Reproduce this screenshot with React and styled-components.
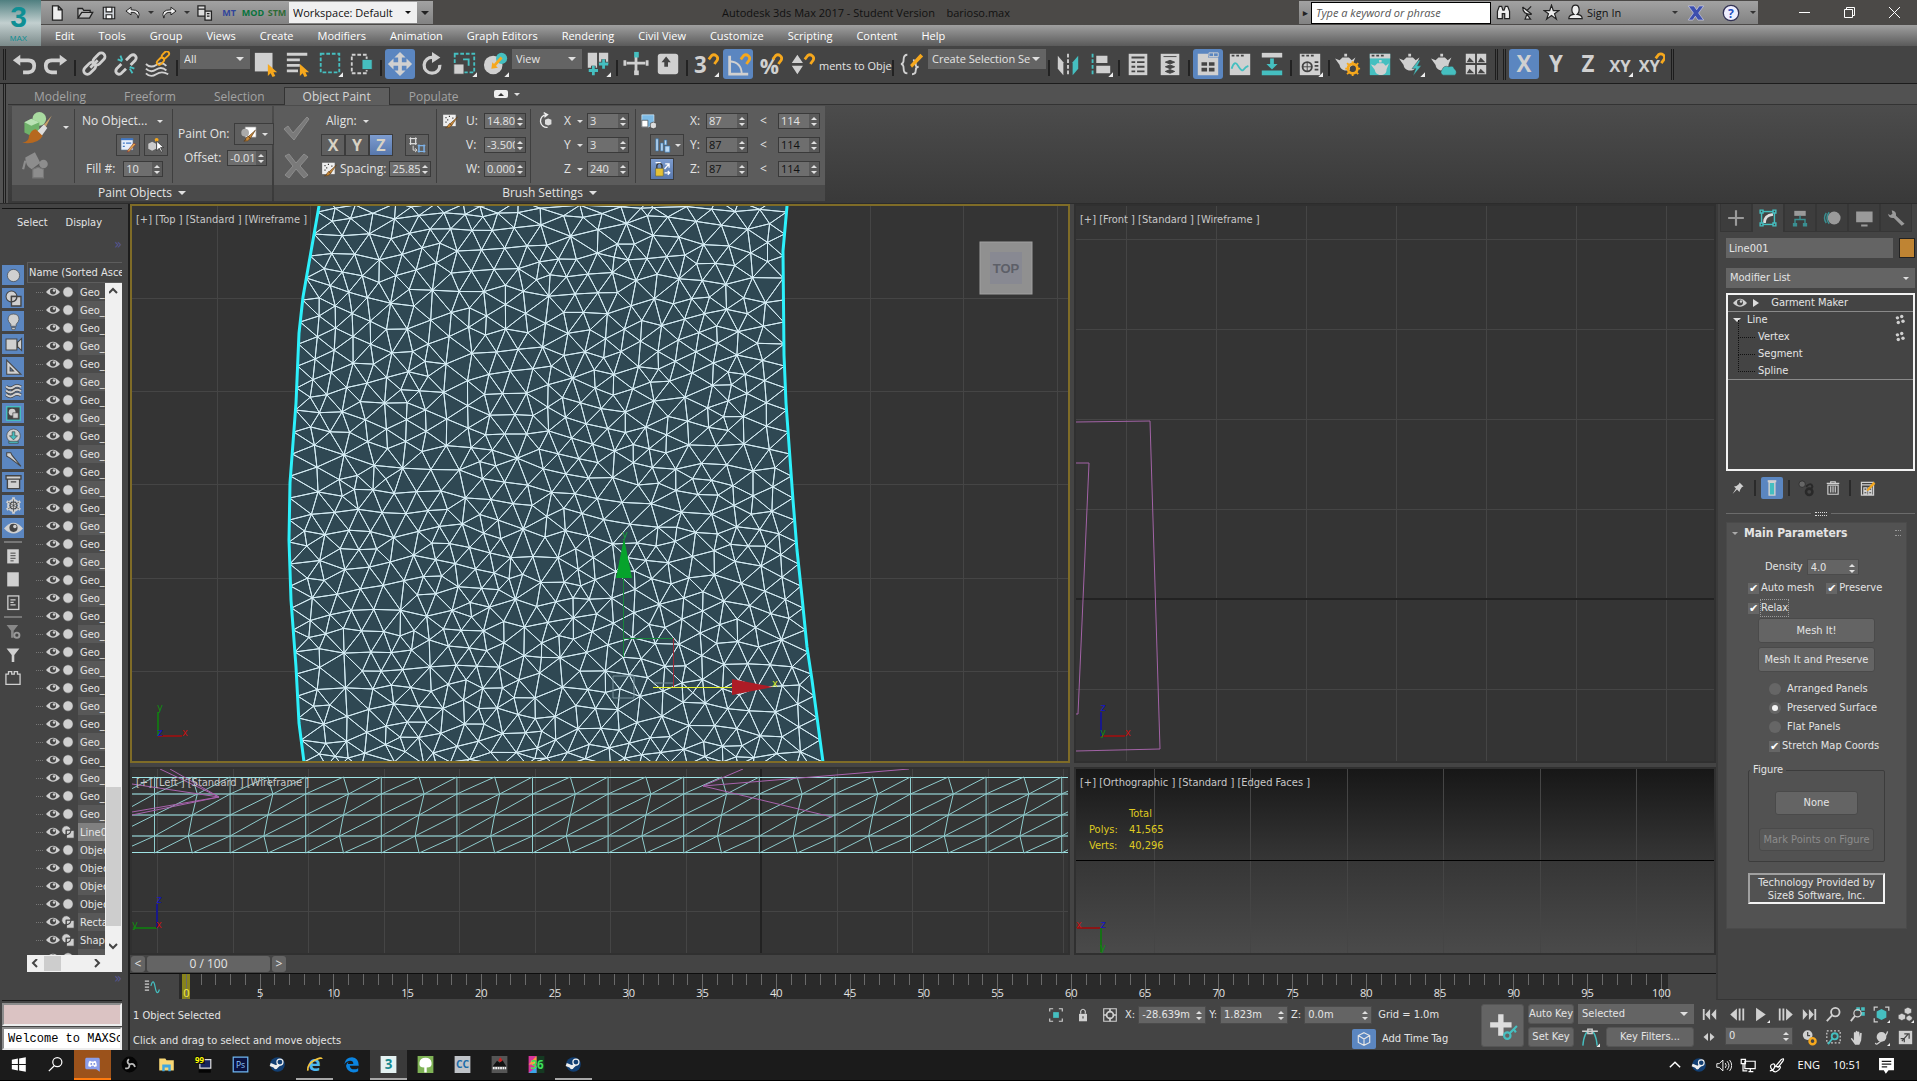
import React from 'react';
import styled, { createGlobalStyle, css } from 'styled-components';

const UI = '"Open Sans", "Noto Sans", sans-serif';
const TAHOMA = '"DejaVu Sans Condensed", "DejaVu Sans", sans-serif';
const L = '#d0d0d0';
const T = '#45bfc0';
const O = '#f6a81d';
const D = '#444444';

/* ---------- icons, all drawn on a 28 x 28 grid ---------- */

const magnet = <path d="M17 9l3-4a4 4 0 0 1 6 5l-3 4" fill="none" stroke={O} strokeWidth="3" />;
const corner = <path d="M28 23v5h-5z" fill="#eee" />;
const cursor = <path d="M16 14v13l3-3 2 4 3-1-2-4h4z" fill={O} />;
const letter = (t, size = 24) => (
  <text x="14" y="23" textAnchor="middle" fontSize={size} fontWeight="bold" fill={L} fontFamily="Open Sans">{t}</text>
);
const teapot = <path d="M0 8l5 2 3-3h7l3 3 4-3-3 7c0 5-3 7-7 7s-7-3-7-6zM10 3h3v3h-3z" fill={L} />;
const steam = (
  <>
    <circle cx="14" cy="14" r="12" fill="#123f73" />
    <path d="M2 14l10 4 6-5" stroke="#eee" strokeWidth="5" fill="none" />
    <circle cx="18" cy="10" r="5" fill="#123f73" stroke="#eee" strokeWidth="2" />
    <circle cx="11" cy="19" r="3" fill="#eee" />
  </>
);

const ICONS = {
  undo: <path d="M10 4L2 10l8 6v-4h8q5 0 5 4.500t-5 4.500h-5v4h6q8-1 8-9t-8-8h-9z" fill={L} />,
  redo: <path d="M18 4l8 6-8 6v-4h-8q-5 0-5 4.500T10 21h5v4H9q-8-1-8-9t8-8h9z" fill={L} />,
  link: <g fill="none" stroke={L} strokeWidth="3"><rect x="12" y="5" width="15" height="8" rx="4" transform="rotate(-45 19 9)" /><rect x="2" y="15" width="15" height="8" rx="4" transform="rotate(-45 9 19)" /><path d="M10 18l8-8" /></g>,
  unlink: <g fill="none" stroke={L} strokeWidth="3"><path d="M14 10l5-5q3-2 5 0t0 5l-5 5M14 19l-5 5q-3 2-5 0t0-5l5-5" /><path d="M8 5l2 5M18 19l3 5M18 17l5 2M5 9l5 2" stroke={T} strokeWidth="2" /></g>,
  bind: <g fill="none" stroke={L} strokeWidth="2"><path d="M1 14q5 5 11 1t11 1M1 19q5 5 11 1t11 1M1 24q5 5 11 1t13 0" /><g stroke={O}><rect x="18" y="2" width="9" height="5" rx="2.500" transform="rotate(-45 22 5)" /><rect x="12" y="9" width="9" height="5" rx="2.500" transform="rotate(-45 16 11)" /></g></g>,
  pick: <><rect x="2" y="2" width="19" height="20" fill={L} />{cursor}</>,
  byname: <><path d="M2 2h22v3H2zM2 8h14v3H2zM2 14h14v3H2zM2 20h12v3H2z" fill={L} />{cursor}</>,
  region: <><rect x="4" y="3" width="20" height="20" fill="none" stroke={T} strokeWidth="2" strokeDasharray="4 2" />{corner}</>,
  crossing: <><rect x="3" y="4" width="16" height="20" fill="none" stroke={L} strokeWidth="2" strokeDasharray="4 2" /><rect x="14" y="9" width="11" height="11" fill={T} stroke={D} /></>,
  move: <path d="M14 1l6 6h-4v5h5V8l6 6-6 6v-4h-5v5h4l-6 6-6-6h4v-5H7v4l-6-6 6-6v4h5V7H8z" fill={L} />,
  rotate: <><path d="M15 7a8.500 8.500 0 1 0 7.500 8" fill="none" stroke={L} strokeWidth="3.500" /><path d="M14 1l9 6-9 6z" fill={L} /></>,
  scale: <><rect x="4" y="3" width="21" height="20" fill="none" stroke={T} strokeWidth="2" strokeDasharray="4 2" /><rect x="3" y="14" width="11" height="11" fill={L} stroke={D} /><path d="M13 9h6v7" fill="none" stroke={T} strokeWidth="2" />{corner}</>,
  place: <><circle cx="11" cy="15" r="10" fill={L} /><circle cx="20" cy="8" r="6" fill={T} /><path d="M9 19l1-7 6 6z" fill={O} /><path d="M12 16l8-9" stroke={O} strokeWidth="3" />{corner}</>,
  pivot: <><path d="M3 2h10v16H3zM15 2h10v12H15z" fill={L} /><path d="M9 16v10M4 21h10M20 9v10M15 14h10" stroke={D} strokeWidth="5" /><path d="M9 16v10M4 21h10M20 9v10M15 14h10" stroke={T} strokeWidth="3" />{corner}</>,
  manip: <><path d="M14 6v18M4 13h20M2 10v6M26 10v6" stroke={L} strokeWidth="3" /><rect x="12" y="1" width="5" height="6" fill={T} /><rect x="12" y="21" width="5" height="5" fill={L} /></>,
  keyb: <><rect x="3" y="3" width="22" height="22" rx="3" fill={L} /><path d="M12 6l5 6h-3v5h-4v-5H7z" fill={D} /></>,
  snap: <><text x="1" y="24" fontSize="24" fontWeight="bold" fill={L} fontFamily="Open Sans">3</text>{magnet}{corner}</>,
  angle: <><path d="M5 5v20h20" fill="none" stroke={L} strokeWidth="3" /><path d="M5 11q13 1 13 14" fill="none" stroke={L} strokeWidth="2" />{magnet}</>,
  percent: <><text x="3" y="25" fontSize="23" fill={L} fontWeight="bold" fontFamily="Open Sans">%</text>{magnet}</>,
  spinner: <><path d="M3 13l6-9 6 9zM3 16h12l-6 9z" fill={L} />{magnet}</>,
  named: <><path d="M9 4q-4 0-4 5t-3 5q3 0 3 5t4 5M15 10q3 0 3 4t3 3q-3 0-3 4t-4 4" fill="none" stroke={L} strokeWidth="2" /><path d="M12 15l11-12 3 3-12 12z" fill={O} /></>,
  mirror: <><path d="M3 5l6 7v14l-6-7z" fill={L} /><path d="M25 5l-6 7v14l6-7z" fill={T} /><path d="M14 3v22" stroke={L} strokeWidth="2" strokeDasharray="4 2" /></>,
  align: <><path d="M6 3v22" stroke={T} strokeWidth="2" strokeDasharray="4 2" /><path d="M10 5h12v8H10zM10 16h15v8H10z" fill={L} />{corner}</>,
  layers: <><rect x="4" y="3" width="20" height="23" fill={L} /><path d="M7 7h14M7 12h4M13 12h8M7 17h4M13 17h8M7 22h4M13 22h8" stroke={D} strokeWidth="2" /></>,
  layerbox: <><rect x="4" y="3" width="20" height="23" fill={L} /><path d="M7 6h14M9 12l5-2 5 2-5 2zM9 17l5-2 5 2-5 2zM9 22l5-2 5 2-5 2z" fill={D} stroke={D} /></>,
  ribbon: <><path d="M3 3h11v4h11v19H3z" fill={L} /><path d="M15 2h10v4H15zM20 2v4" fill="none" stroke={L} /><path d="M7 14h6M15 14h6M7 20h6M15 20h6" stroke={D} strokeWidth="4" /></>,
  curve: <><path d="M3 3h22v23H3z" fill={L} /><path d="M5 5h3M10 5h3M15 5h3" stroke={D} strokeWidth="2" /><path d="M5 19q3-10 7-3t6 4 5-4" fill="none" stroke={T} strokeWidth="2" /></>,
  schem: <><path d="M3 2h22v5H3z" fill={L} /><path d="M3 21h22v5H3zM12 8h4v6h4l-6 6-6-6h4z" fill={T} /></>,
  material: <><path d="M3 3h22v23H3z" fill={L} /><path d="M5 5h3M10 5h3M15 5h3M19 12h4M19 16h4M19 20h4" stroke={D} strokeWidth="2" /><circle cx="11" cy="17" r="5" fill="none" stroke={D} strokeWidth="2" /><path d="M11 12v10M6 17h10" stroke={D} />{corner}</>,
  rsetup: <>{teapot}<circle cx="19" cy="19" r="5" fill="none" stroke={O} strokeWidth="3" /><path d="M19 11v4M19 23v4M11 19h4M23 19h4M13 13l3 3M22 22l3 3M25 13l-3 3M16 22l-3 3" stroke={O} strokeWidth="2" /><circle cx="19" cy="19" r="3" fill={D} /></>,
  rframe: <><path d="M3 3h22v23H3z" fill={T} /><path d="M3 3h22v5H3z" fill={L} /><path d="M5 5h3M10 5h3M15 5h3" stroke={D} strokeWidth="2" /><g transform="translate(4 7) scale(.9)">{teapot}</g></>,
  rprod: <>{teapot}<path d="M21 10l-7 9h4l-3 8 9-11h-4l3-6z" fill={T} stroke={D} strokeWidth=".5" />{corner}</>,
  rcloud: <>{teapot}<path d="M13 26q-4-2-1-6 2-5 7-3 5-2 6 2 4 3 1 7z" fill={T} stroke={D} strokeWidth=".5" /></>,
  gallery: <><path d="M3 3h10v10H3zM15 3h10v10H15zM3 15h10v10H3zM15 15h10v10H15z" fill={L} /><path d="M4 12l3-5 5 5zM16 12l3-5 5 5zM4 24l3-5 5 5zM16 24l3-5 5 5z" fill={D} /></>,
  ax: letter('X'),
  ay: letter('Y'),
  az: letter('Z'),
  axy: <>{letter('XY', 18)}{corner}</>,
  axp: <><text x="11" y="23" textAnchor="middle" fontSize="18" fontWeight="bold" fill={L} fontFamily="Open Sans">XY</text><g transform="translate(1 -1)">{magnet}</g></>,

  file: <path d="M7 3h9l6 6v16H7zM16 3v6h6" fill="#eee" stroke="#222" strokeWidth="2" />,
  open: <path d="M3 22V7h7l2 3h10v3M3 22l6-9h17l-5 9z" fill="#bbb" stroke="#222" strokeWidth="2" />,
  save: <><path d="M4 4h20v20H4z" fill="#cfd3d8" stroke="#222" strokeWidth="2" /><path d="M9 4h10v8H9zM9 17h10v7H9z" fill="#fff" stroke="#222" strokeWidth="2" /></>,
  uarrow: <path d="M11 5l-8 6 8 6v-4q10-1 11 9 6-13-11-13z" fill="#eee" stroke="#222" strokeWidth="1.500" />,
  rarrow: <path d="M17 5l8 6-8 6v-4q-10-1-11 9-6-13 11-13z" fill="#eee" stroke="#222" strokeWidth="1.500" />,
  project: <path d="M3 3h11v16H3zM3 8h11M14 11h10v14H14zM17 15h4M17 19h4" fill="#ddd" stroke="#222" strokeWidth="2" />,
  bino: <path d="M4 24V12l3-8h4l2 6h2l2-6h4l3 8v12h-8v-8h-4v8z" fill="#eee" stroke="#222" strokeWidth="2" />,
  dish: <path d="M6 5q0 13 15 12M6 5l15 12M13 11l7-7M10 25l3-8 6 8z" fill="#eee" stroke="#222" strokeWidth="2" />,
  star: <path d="M14 2l3 9h9l-7 5 3 9-8-6-8 6 3-9-7-5h9z" fill="#eee" stroke="#222" strokeWidth="2" />,
  user: <path d="M14 2q6 0 6 8 0 5-3 7 8 1 8 7H3q0-6 8-7-3-2-3-7 0-8 6-8z" fill="#eee" stroke="#222" strokeWidth="2" />,
  exchange: <path d="M2 3h9l4 6 4-6h7l-8 11 8 11h-9l-4-6-4 6H2l8-11z" fill="#3c4fae" stroke="#d5d5ee" />,
  help: <><circle cx="14" cy="14" r="12" fill="#eef" stroke="#335" strokeWidth="2" /><text x="14" y="21" fontSize="19" fontWeight="bold" textAnchor="middle" fill="#2450c0" fontFamily="Open Sans">?</text></>,

  sphere: <circle cx="14" cy="14" r="9" fill={L} stroke={D} />,
  shapes: <><circle cx="11" cy="11" r="8" fill={L} stroke={D} strokeWidth="1.500" /><path d="M11 11h14v14H11z" fill={L} stroke={D} strokeWidth="2" /><path d="M11 19v-8h8q0 7-8 8z" fill={L} stroke={D} strokeWidth="2" /></>,
  bulb: <path d="M14 3q8 0 8 8 0 3-4 7v3h-8v-3q-4-4-4-7 0-8 8-8zM11 23h6l-1 3h-4z" fill={L} stroke={D} />,
  camera: <path d="M3 6h16v16H3zM20 11l6-6v18l-6-6z" fill={L} stroke={D} strokeWidth="1.500" />,
  helper: <path d="M4 3l21 21H4zM9 14v5h5z" fill={L} stroke={D} fillRule="evenodd" strokeWidth="1.500" />,
  waves: <g fill="none"><path d="M3 8q6 5 11 1t11 0M3 14q6 5 11 1t11 0M3 20q6 5 11 1t11 0" stroke={D} strokeWidth="5" /><path d="M3 8q6 5 11 1t11 0M3 14q6 5 11 1t11 0M3 20q6 5 11 1t11 0" stroke={L} strokeWidth="3" /></g>,
  group: <><rect x="4" y="4" width="20" height="20" fill={D} stroke={T} strokeWidth="2" /><circle cx="12" cy="12" r="5" fill={L} /><path d="M13 13h8v8h-8z" fill={L} stroke={D} /></>,
  xref: <><circle cx="14" cy="13" r="10" fill={L} stroke={D} /><path d="M12 7h4v6h4l-6 6-6-6h4zM7 21h14v3H7z" fill={T} stroke={D} /></>,
  bone: <path d="M4 4h6l2 4 13 16-16-12-5-3z" fill={L} stroke={D} strokeWidth="1.500" />,
  container: <path d="M3 4h22v5H3zM5 9h18v14H5zM10 13h8" fill={L} stroke={D} strokeWidth="2" />,
  frozen: <g fill="none"><path d="M14 2v24M4 8l20 12M24 8L4 20" stroke={L} strokeWidth="4" /><circle cx="14" cy="14" r="8" stroke={L} strokeWidth="3" /><circle cx="14" cy="14" r="5" stroke={D} strokeWidth="1.500" /><path d="M14 5v18M6 9l16 10M22 9L6 19" stroke={D} /></g>,
  eye: <><path d="M0 14q14-17 28 0-14 15-28 0z" fill={L} /><circle cx="14" cy="13" r="6" fill={D} /><circle cx="16" cy="11" r="2.500" fill={L} /></>,
  doc: <><rect x="5" y="2" width="18" height="22" fill={L} /><path d="M10 8h8M10 12h8M10 16h8M10 20h5" stroke={D} strokeWidth="1.500" /></>,
  blank: <rect x="5" y="2" width="18" height="22" fill={L} />,
  docframe: <><rect x="6" y="3" width="17" height="21" fill="none" stroke={L} strokeWidth="2" /><path d="M10 9h8M10 13h5M10 17h8" stroke={L} strokeWidth="2" /></>,
  funnelgear: <><path d="M4 3h18l-7 9v11h-4V12z" fill="#888" /><circle cx="20" cy="19" r="4" fill="none" stroke="#999" strokeWidth="3" /></>,
  funnel: <path d="M4 4h20l-8 10v11h-4V14z" fill={L} />,
  brick: <path d="M3 8h4V4h5v4h4V4h5v4h4v16H3z" fill="none" stroke={L} strokeWidth="2" />,

  paintbrush: <><circle cx="16" cy="6" r="6" fill="#a9dba0" /><path d="M3 9l6-3 7 3v9l-7 3-6-3z" fill="#6fb26a" /><path d="M3 9l6-3 7 3-7 3z" fill="#b9e2b4" /><path d="M27 3L15 17l3 3z" fill="#c9a06a" /><path d="M20 11l-6 6 4 4 5-7z" fill="#ddd" /><path d="M13 15l6 6q-5 8-18 6 6-1 6-6 2-6 6-6z" fill="#b6681f" /></>,
  can: <g fill="#8d8d8d"><path d="M4 7l9-5 5 10-8 6q-6-3-6-11z" /><circle cx="21" cy="13" r="4" /><path d="M11 18l5-2 5 2v8h-10z" stroke="#777" /><path d="M2 18l2-8" stroke="#8d8d8d" strokeWidth="2" /></g>,
  editlist: <><path d="M3 4h19v18H3z" fill="#e6eefa" stroke="#456" /><path d="M3 5h19" stroke="#3f78c8" strokeWidth="3" /><path d="M6 11h3M11 11h8M6 16h3" stroke="#3f78c8" strokeWidth="2" /><path d="M26 13L16 24l-3 1 1-3 9-11z" fill="#e0a94c" stroke="#833" /></>,
  pickobj: <><path d="M2 12l6-3 6 3v8l-6 3-6-3z" fill="#ccc" /><circle cx="15" cy="6" r="3" fill={O} /><path d="M15 8v15l4-4 3 6 2-1-3-6h5z" fill="#fff" stroke="#222" /></>,
  painton: <><path d="M8 3h17v16H8z" fill="#fff" stroke="#888" /><circle cx="8" cy="12" r="6" fill="#aaa" /><path d="M24 8L13 18l3 3zM13 17l3 4q-3 5-10 4 4-1 3-4z" fill="#c98a3a" stroke="#5d3a14" /></>,
  check: <path d="M2 15l4-3 5 7L25 3l2 2-15 21z" fill="#7a7a7a" stroke="#8d8d8d" />,
  cross: <path d="M3 5l4-2 7 9 8-9 4 3-8 9 8 9-4 3-8-9-7 9-4-3 8-9z" fill="#7a7a7a" stroke="#8d8d8d" />,
  scatter: <g fill="none" strokeWidth="1.500"><path d="M4 4h8v8H4zM2 4h12M2 12h12M4 2v12M12 2v12M8 15v7h5M11 19l3 3-3 3" stroke="#ddd" /><path d="M17 15h8v9h-8zM15 15h12M15 24h12M17 13v13M25 13v13" stroke="#7fb4ea" /></g>,
  dotbrush: <><path d="M2 3h22v20H2z" fill="#eee" /><path d="M6 8h2M12 6h2M18 9h2M9 12h2M6 16h2" stroke="#333" strokeWidth="2" /><path d="M27 7L14 19l3 3zM14 18l3 4q-4 5-11 4 5-1 4-4z" fill="#c98a3a" stroke="#5d3a14" /></>,
  rotobj: <><path d="M16 4a10 10 0 1 0 2 20M12 1l6 3-5 4" fill="none" stroke="#eee" strokeWidth="2" /><path d="M14 12l5-2 5 2v7l-5 2-5-2z" fill="#ddd" /></>,
  scaleobj: <><path d="M3 3h20v12l-8 8H3z" fill="#7dbbe6" stroke="#e2f2fc" /><path d="M3 12h10v11H3z" fill="#fff" stroke="#333" /><path d="M17 17l5-2 5 2v7l-5 2-5-2z" fill="#ddd" stroke="#333" /></>,
  bars: <path d="M3 3h4v20H3zM11 10h4v13h-4zM17 5h4v8h-4zM18 15h8v10h-8z" fill="#bcd9f2" stroke="#2f74b5" />,
  lock: <><path d="M4 13h12v12H4z" fill="#e5c136" stroke="#664" /><path d="M6 13V8q4-6 8 0v5" fill="none" stroke="#333" strokeWidth="2" /><path d="M18 14l7-8M19 6h6v6M18 20h8M23 17l3 3-3 3M4 4h8" fill="none" stroke="#fff" strokeWidth="2" /></>,

  plus: <path d="M14 3v22M3 14h22" stroke="#9a9a9a" strokeWidth="3" />,
  modify: <><rect x="5" y="5" width="18" height="18" fill="none" stroke={T} strokeWidth="2" /><path d="M9 21q0-11 12-12" fill="none" stroke="#ddd" strokeWidth="4" /><path d="M3 3h4v4H3zM21 3h4v4h-4zM3 21h4v4H3zM21 21h4v4h-4z" fill={D} stroke={T} strokeWidth="2" /></>,
  hier: <><path d="M6 4h16v7H6z" fill="#9a9a9a" /><path d="M14 11v5M7 22v-6h14v6" stroke="#3a8f91" strokeWidth="2" fill="none" /><path d="M4 21h6v5H4zM18 21h6v5h-6z" fill="#3a8f91" /></>,
  motion: <><circle cx="17" cy="14" r="9" fill="#9a9a9a" /><path d="M10 6q-6 8 0 16M6 7q-5 7 0 14" stroke="#3a8f91" strokeWidth="2" fill="none" /></>,
  display: <path d="M3 5h23v15H3zM10 23h9v3h-9z" fill="#9a9a9a" />,
  wrench: <path d="M3 8q1 7 8 6l11 11 4-3-12-11q1-7-6-8l1 5-3 2z" fill="#9a9a9a" />,
  pin: <path d="M17 3l8 8-3 1-4 6-1 4-5-5-9 9 7-11-4-4 5-1 5-4z" fill={L} />,
  tube: <><path d="M8 3h12v3H8z" fill={L} /><path d="M10 6h8v18h-8z" fill={T} stroke={L} strokeWidth="2" /></>,
  unique: <><circle cx="8" cy="8" r="5" fill="#666" stroke="#222" /><circle cx="19" cy="20" r="5" fill="none" stroke="#292929" strokeWidth="4" /><path d="M14 12q8-8 10 0l-2 4" fill="none" stroke="#292929" strokeWidth="3" /></>,
  trash: <path d="M3 6h22M10 6V3h8v3M5 9h18v16H5zM10 11v11M14 11v11M18 11v11" fill="none" stroke={L} strokeWidth="2" />,
  config: <><path d="M4 4h20v21H4zM4 8h20M8 13h5v4H8zM16 13h5v4h-5zM8 19h5v4H8zM16 19h5v4h-5z" fill="none" stroke={L} strokeWidth="2" /><path d="M12 17L24 3l3 3-12 12z" fill={O} /></>,
  flower: <g fill={L}><circle cx="8" cy="9" r="4" /><circle cx="18" cy="6" r="4" /><circle cx="21" cy="17" r="4" /><circle cx="10" cy="20" r="4" /></g>,

  mini: <><path d="M3 5h7M3 10h7M3 15h7M3 20h7" stroke={L} strokeWidth="2" /><path d="M13 13q4-14 7 2t7 4" stroke={T} strokeWidth="2" fill="none" /></>,
  isolate: <><path d="M3 8V3h6M19 3h6v5M25 20v5h-6M9 25H3v-5" fill="none" stroke={L} strokeWidth="2" /><path d="M9 9h10v10H9z" fill={T} /></>,
  padlock: <><path d="M7 12h14v13H7z" fill={L} /><path d="M10 12V7q4-6 8 0v5" fill="none" stroke={L} strokeWidth="2" /><path d="M14 16v4" stroke={D} strokeWidth="2" /></>,
  absolute: <><path d="M3 3h22v22H3z" fill="none" stroke={L} strokeWidth="2" /><circle cx="14" cy="14" r="6" fill="none" stroke={L} strokeWidth="3" /><path d="M14 3v6M14 19v6M3 14h6M19 14h6" stroke={L} strokeWidth="3" /></>,
  tag: <path d="M14 3l10 5v12l-10 5-10-5V8zM4 8l10 6 10-6M14 14v11" fill="none" stroke="#e6e6e6" strokeWidth="2" />,
  bigkey: <><path d="M12 3v20M2 13h20" stroke="#ddd" strokeWidth="5" /><circle cx="18" cy="23" r="3" fill="none" stroke={T} strokeWidth="2" /><path d="M20 21l7-7M24 17l2 3" stroke={T} strokeWidth="2" /></>,
  tangent: <><path d="M4 26q2-20 9-20M24 26q-2-20-9-20" stroke={T} strokeWidth="2" fill="none" /><path d="M3 6h22M11 3h6v6h-6z" stroke={L} fill={D} strokeWidth="2" />{corner}</>,
  tostart: <path d="M3 5h3v18H3zM15 5v18l-8-9zM25 5v18l-8-9z" fill={L} />,
  prev: <path d="M13 4v20L2 14zM16 4h3v20h-3zM22 4h3v20h-3z" fill={L} />,
  play: <><path d="M5 3l16 11L5 25z" fill={L} />{corner}</>,
  next: <path d="M15 4v20l11-10zM3 4h3v20H3zM9 4h3v20H9z" fill={L} />,
  toend: <path d="M22 5h3v18h-3zM13 5v18l8-9zM3 5v18l8-9z" fill={L} />,
  keymode: <path d="M12 6v16L3 14zM16 6v16l9-8z" fill={L} />,
  timecfg: <><circle cx="11" cy="10" r="8" fill={L} /><path d="M11 5v6h4" stroke={D} strokeWidth="2" fill="none" /><circle cx="19" cy="20" r="5" fill="none" stroke={O} strokeWidth="4" /></>,
  zoom: <><circle cx="17" cy="10" r="7" fill="none" stroke={L} strokeWidth="3" /><path d="M12 15L3 25" stroke={L} strokeWidth="3" /></>,
  zoomall: <><path d="M12 2h6v6h-6zM20 2h6v6h-6zM20 10h6v6h-6z" fill={T} /><circle cx="14" cy="12" r="6" fill="none" stroke={L} strokeWidth="2" /><path d="M10 16l-7 9" stroke={L} strokeWidth="3" /></>,
  zoomext: <><path d="M14 5l8 4v10l-8 4-8-4V9z" fill={T} /><path d="M2 8V2h6M20 2h6v6M2 20v6h6" stroke={L} strokeWidth="2" fill="none" />{corner}</>,
  zoomextall: <><path d="M18 2l6 3v6l-6 3-6-3V5zM8 12l6 3v6l-6 3-6-3v-6zM20 15l5 3v4l-5 3-5-3v-4z" fill={L} stroke={D} />{corner}</>,
  zoomreg: <><rect x="3" y="3" width="22" height="20" fill="none" stroke={L} strokeWidth="2" strokeDasharray="3 3" /><circle cx="16" cy="12" r="5" fill="none" stroke={T} strokeWidth="3" /><path d="M12 16l-7 9" stroke={T} strokeWidth="3" /></>,
  hand: <path d="M8 15V6q2-2 3 0v6V4q2-2 3 0v8V5q2-2 3 0v8l1-6q2-2 3 0l-1 12-3 7h-7L3 16q1-3 5 3z" fill={L} />,
  orbit: <><circle cx="14" cy="13" r="8" fill={L} /><path d="M4 23q1 5 10-4T24 4" stroke={L} strokeWidth="2" fill="none" />{corner}</>,
  maxview: <><path d="M3 3h22v22H3z" fill={L} /><path d="M8 20l10-11M12 8h8v8M6 16h6v6" stroke={D} strokeWidth="2" fill="none" /></>,

  win: <path d="M3 6l10-2v9H3zM15 4l11-2v11H15zM3 15h10v9L3 22zM15 15h11v11l-11-2z" fill="#fff" />,
  search: <><circle cx="17" cy="10" r="7.500" fill="none" stroke="#fff" strokeWidth="2" /><path d="M12 16l-9 9" stroke="#fff" strokeWidth="2" /></>,
  discord: <><path d="M4 3h20q2 0 2 3v20l-6-4H4q-2 0-2-3V6q0-3 2-3z" fill="#8b9eea" /><path d="M7 17q0-8 3-9l2 1h4l2-1q3 1 3 9l-4 1-1-2h-4l-1 2z" fill="#fff" /><circle cx="12" cy="13" r="1.500" fill="#7289da" /><circle cx="17" cy="13" r="1.500" fill="#7289da" /></>,
  obs: <><circle cx="14" cy="14" r="13" fill="#050505" /><path d="M13 5q-5 5 1 9M7 20q7 2 7-6M23 18q-2-7-9-4" stroke="#bbb" strokeWidth="3" fill="none" /></>,
  folder: <><path d="M2 4h10l2 3h12v17H2z" fill="#f8d775" /><path d="M7 25V14h14v11h-4v-6h-6v6z" fill="#3fa7df" /></>,
  monitor: <><path d="M8 6h18v14H8z" fill="#18265e" stroke="#ddd" strokeWidth="2" /><path d="M0 0h16v13H0z" fill="#111" /><text x="0" y="11" fontSize="13" fontWeight="bold" fill="#ff0" fontFamily="Open Sans">99</text><path d="M6 25h20" stroke="#050505" strokeWidth="5" /></>,
  ps: <><path d="M2 2h24v24H2z" fill="#0a1140" stroke="#6fb7f4" strokeWidth="2" /><text x="14" y="19" textAnchor="middle" fontSize="14" fill="#8cc9ff" fontFamily="Open Sans">Ps</text></>,
  steam,
  ie: <><text x="14" y="25" textAnchor="middle" fontSize="34" fontWeight="bold" fill="#4fb8ec" fontFamily="Open Sans">e</text><path d="M3 24Q2 13 14 7T26 5" stroke="#f4c63d" strokeWidth="3" fill="none" /></>,
  edge: <path d="M2 14Q4 2 15 2q11 1 11 14H11q1 6 7 6 4 0 7-2v5q-4 2-8 2-11-1-12-11 1-5 5-7-2 2-2 4h9q0-5-5-5-6 0-10 6z" fill="#0b84e0" />,
  max3: <><path d="M1 0h26v28H1z" fill="#e4f2f2" /><text x="14" y="22" textAnchor="middle" fontSize="22" fontWeight="bold" fill="#168a90" fontFamily="Open Sans">3</text></>,
  tree: <><path d="M1 0h26v28H1z" fill="#7fb356" /><path d="M12 27v-8q-9 0-8-8 1-8 10-8 9 0 10 8 1 8-8 8v8z" fill="#fff" /></>,
  cc: <><path d="M1 0h26v28H1z" fill="#bfc3c8" /><text x="14" y="20" textAnchor="middle" fontSize="17" fontWeight="bold" fill="#1b6ca8" fontFamily="Open Sans">CC</text></>,
  game: <><path d="M1 0h26v28H1z" fill="#555" /><path d="M3 17l7-9 4 3 5-4 6 10z" fill="#111" /><path d="M3 20h22" stroke="#eee" strokeWidth="4" strokeDasharray="3 1" /><path d="M12 8l3-6 4 5-3 3z" fill="#c22" /></>,
  s36: <><path d="M1 0h14v28H1z" fill="#d8349a" /><path d="M14 0h13v28H14z" fill="#153a22" /><path d="M1 14L14 0v14z" fill="#f8a13c" /><path d="M1 28l13-10v10z" fill="#3ba6e8" /><text x="15" y="22" textAnchor="middle" fontSize="19" fontWeight="bold" fill="#3fe05a" fontFamily="Open Sans">36</text></>,
  up: <path d="M5 18l9-9 9 9" stroke="#fff" strokeWidth="2.500" fill="none" />,
  volume: <path d="M3 11h4l6-6v18l-6-6H3zM17 10q3 4 0 8M20 7q6 7 0 14M24 5q7 9 0 18" stroke="#fff" strokeWidth="1.500" fill="none" />,
  net: <path d="M8 7h17v12H8zM14 24h8M17 19v5M2 4h7v7H2zM5 11v12h7" stroke="#fff" strokeWidth="2" fill="none" />,
  pen: <path d="M3 23q7-1 8-7t-4-4-1 8 8 4 6-6-8-2L22 4q5-3 3 2l-9 12" stroke="#fff" strokeWidth="2" fill="none" />,
  note: <><path d="M3 3h22v18h-8l-4 5-3-5H3z" fill="#fff" /><path d="M7 8h14M7 12h14M7 16h8" stroke="#1c1c1c" strokeWidth="2" /></>,
};

const Svg = styled.svg`
  display: block;
  flex: none;
`;

const Icon = ({ name, size = 28 }) => (
  <Svg width={size} height={size} viewBox="0 0 28 28" aria-hidden="true">{ICONS[name]}</Svg>
);

/* ---------- viewport drawings ---------- */

const random = (seed) => () => {
  seed = (seed * 16807) % 2147483647;
  return seed / 2147483647;
};

// Bowyer-Watson, returns triangles as index triples
const triangulate = (points) => {
  const n = points.length;
  const all = [...points, [-9000, -9000], [9000, -9000], [500, 12000]];
  const make = (a, b, c) => {
    const [ax, ay] = all[a];
    const [bx, by] = all[b];
    const [cx, cy] = all[c];
    const d = 2 * (ax * (by - cy) + bx * (cy - ay) + cx * (ay - by));
    const a2 = ax * ax + ay * ay;
    const b2 = bx * bx + by * by;
    const c2 = cx * cx + cy * cy;
    const x = (a2 * (by - cy) + b2 * (cy - ay) + c2 * (ay - by)) / d;
    const y = (a2 * (cx - bx) + b2 * (ax - cx) + c2 * (bx - ax)) / d;
    return { v: [a, b, c], x, y, r: (ax - x) ** 2 + (ay - y) ** 2 };
  };
  let tris = [make(n, n + 1, n + 2)];
  for (let i = 0; i < n; i++) {
    const [px, py] = all[i];
    const edges = new Map();
    tris = tris.filter((t) => {
      if ((px - t.x) ** 2 + (py - t.y) ** 2 >= t.r) return true;
      [[0, 1], [1, 2], [2, 0]].forEach(([p, q]) => {
        const a = Math.min(t.v[p], t.v[q]);
        const b = Math.max(t.v[p], t.v[q]);
        const key = `${a}_${b}`;
        if (edges.has(key)) edges.delete(key);
        else edges.set(key, [a, b]);
      });
      return false;
    });
    edges.forEach(([a, b]) => tris.push(make(a, b, i)));
  }
  return tris.map((t) => t.v).filter((v) => v.every((k) => k < n));
};

const LEFT_EDGE = [[322, 190], [319, 206], [303, 297], [299, 333], [296, 403], [290, 483], [289, 540], [291, 600], [296, 667], [299, 723], [304, 762], [307, 785]];
const RIGHT_EDGE = [[789, 190], [787, 206], [783, 251], [784, 355], [786, 403], [793, 500], [797, 550], [802, 597], [807, 647], [812, 680], [823, 762], [826, 785]];

const edgeX = (edge, y) => {
  const i = Math.max(1, edge.findIndex((p) => p[1] >= y));
  const [x0, y0] = edge[i - 1];
  const [x1, y1] = edge[i];
  return x0 + ((x1 - x0) * (y - y0)) / (y1 - y0);
};

// scattered points kept a minimum distance apart, then smoothed twice
const clothPath = () => {
  const rnd = random(77);
  const pts = [];
  for (let y = 190; y <= 784; y += 22) {
    pts.push([edgeX(LEFT_EDGE, y), y], [edgeX(RIGHT_EDGE, y), y]);
  }
  const fixed = pts.length;
  for (let i = 0; i < 16000; i++) {
    const x = 285 + rnd() * 545;
    const y = 191 + rnd() * 592;
    if (x < edgeX(LEFT_EDGE, y) + 12 || x > edgeX(RIGHT_EDGE, y) - 12) continue;
    if (pts.every((p) => (p[0] - x) ** 2 + (p[1] - y) ** 2 > 250)) pts.push([x, y]);
  }
  let tris = triangulate(pts);
  for (let pass = 0; pass < 2; pass++) {
    const sums = pts.map(() => [0, 0, 0]);
    tris.forEach((t) => t.forEach((k) => {
      t.forEach((m) => {
        if (m === k) return;
        sums[k][0] += pts[m][0];
        sums[k][1] += pts[m][1];
        sums[k][2] += 1;
      });
    }));
    for (let k = fixed; k < pts.length; k++) {
      pts[k] = [sums[k][0] / sums[k][2], sums[k][1] / sums[k][2]];
    }
    tris = triangulate(pts);
  }
  return tris.map((t) => `M${t.map((k) => pts[k].map((c) => c.toFixed(1)).join(' ')).join('L')}Z`).join('');
};

const CLOTH = clothPath();
const OUTLINE = `M${[...LEFT_EDGE, ...[...RIGHT_EDGE].reverse()].map((p) => p.join(' ')).join('L')}Z`;

const range = (from, to, step) => {
  const out = [];
  for (let v = from; v <= to; v += step) out.push(Math.round(v));
  return out;
};

const Grid = ({ xs, ys, box }) => {
  const [x, y, w, h] = box;
  return (
    <g fill="#454545">
      {xs.map((v) => <rect key={`x${v}`} x={v} y={y} width="1" height={h} />)}
      {ys.map((v) => <rect key={`y${v}`} x={x} y={v} width={w} height="1" />)}
    </g>
  );
};

const Tripod = ({ x, y, right, up, centre, dir = [1, -1] }) => {
  const colors = { x: '#c01212', y: '#128a12', z: '#1212c8' };
  const dim = { x: '#8a1616', y: '#167016', z: '#18188a' };
  const [dx, dy] = dir;
  return (
    <g fontFamily={TAHOMA} fontSize="11" textAnchor="middle">
      <path d={`M${x} ${y}h${24 * dx}`} stroke={dim[right]} strokeWidth="2" />
      <path d={`M${x} ${y}v${24 * dy}`} stroke={dim[up]} strokeWidth="2" />
      <text x={x + 27 * dx - (dx < 0 ? -5 : 0)} y={y} fill={colors[right]}>{right}</text>
      <text x={x + 2} y={dy < 0 ? y - 25 : y + 23} fill={colors[up]}>{up}</text>
      <text x={x + 2} y={y} fill={colors[centre]}>{centre}</text>
    </g>
  );
};

const Canvas = styled.svg`
  grid-area: 1 / 1;
  display: block;
  width: 100%;
  height: 100%;
  min-height: 0;
`;

const TopScene = () => (
  <Canvas viewBox="132 206 936 555" preserveAspectRatio="xMinYMin slice">
    <clipPath id="cloth"><path d={OUTLINE} /></clipPath>
    <Grid xs={range(217, 1060, 93.3)} ys={range(298, 700, 93.2)} box={[132, 206, 936, 555]} />
    <path d={OUTLINE} fill="#2f4853" />
    <path d={CLOTH} clipPath="url(#cloth)" fill="none" stroke="#d6edf5" strokeWidth="1" />
    <path d={OUTLINE} fill="none" stroke="#2cf0fb" strokeWidth="3" />
    <path d="M613 676h21v22h-21zM653 683h20" fill="none" stroke="#7d95a0" />
    <path d="M623.500 657v-80M623 638.500h50" stroke="#17883c" strokeWidth="1" />
    <path d="M673.500 638v49" stroke="#9c2a38" strokeWidth="1" />
    <path d="M653 687.500h80" stroke="#e5f02a" />
    <path d="M616 578l8-40 8 40z" fill="#06a32c" />
    <path d="M732 679v16l41-8z" fill="#ad1c26" />
    <text x="625" y="538" fontSize="11" textAnchor="middle" fill="#17a03c" fontFamily={TAHOMA}>y</text>
    <text x="775" y="687" fontSize="11" textAnchor="middle" fill="#d7e52a" fontFamily={TAHOMA}>x</text>
    <Tripod x={158} y={736} right="x" up="y" centre="z" />
    <rect x="980" y="242" width="52" height="52" fill="#909090" stroke="#a0a0a0" />
    <rect x="990" y="252" width="32" height="32" fill="#888992" />
    <text x="1006" y="273" fontSize="13" fontWeight="bold" textAnchor="middle" fill="#5d5f68" fontFamily="Liberation Sans Narrow, Liberation Sans">TOP</text>
  </Canvas>
);

const FrontScene = () => (
  <Canvas viewBox="1076 206 638 555" preserveAspectRatio="xMinYMin slice">
    <Grid xs={range(1126, 1700, 90)} ys={[239, 329, 419, 509, 689]} box={[1076, 206, 640, 555]} />
    <rect x="1076" y="598" width="640" height="2" fill="#222" />
    <path d="M1076 422l74-1 10 328-84 2M1076 463h13l-11 251h-2" fill="none" stroke="#a263a6" strokeWidth="1" />
    <Tripod x={1101} y={736} right="x" up="z" centre="y" />
  </Canvas>
);

const strip = () => {
  const rows = [777, 794, 815, 836, 853];
  const wave = [0, 5, 0, -4, 0];
  const at = (col, row) => 154.500 + col * 37.8 + (col % 2 ? wave[row] : 0);
  let d = '';
  for (let c = -2; c < 26; c++) {
    for (let r = 0; r < 4; r++) {
      d += `M${at(c, r)} ${rows[r]}L${at(c, r + 1)} ${rows[r + 1]}L${at(c + 1, r)} ${rows[r]}`;
    }
  }
  return d;
};

const LeftScene = () => (
  <Canvas viewBox="132 769 936 184" preserveAspectRatio="xMinYMin slice">
    <Grid xs={range(157, 1066, 75.5).filter((x) => x !== 761)} ys={[911]} box={[132, 769, 936, 184]} />
    <rect x="760" y="769" width="2" height="184" fill="#222" />
    <path d="M132 794h936M132 815h936M132 836h936" stroke="#6f9596" strokeWidth="2" />
    <path d="M132 777.500h936M132 852.500h936" stroke="#9fe3e4" />
    <path d={strip()} fill="none" stroke="#8fcccd" strokeWidth="1" />
    <path d="M160 769l59 28-49-28M132 784l87 13-87 15M132 815l87-18M743 769l-40 17 206-17M703 786l129 31" fill="none" stroke="#a863ad" strokeWidth="1" />
    <Tripod x={157} y={928} right="y" up="z" centre="x" dir={[-1, -1]} />
  </Canvas>
);

const OrthoScene = () => (
  <Canvas viewBox="1076 769 638 184" preserveAspectRatio="xMinYMin slice">
    <linearGradient id="sky" x1="0" y1="0" x2="0" y2="1">
      <stop offset="0" stopColor="#171717" />
      <stop offset="0.5" stopColor="#363636" />
      <stop offset="1" stopColor="#4a4a4a" />
    </linearGradient>
    <rect x="1076" y="769" width="640" height="184" fill="url(#sky)" />
    <Grid xs={range(1154, 1700, 96.4)} ys={[]} box={[1076, 769, 640, 184]} />
    <rect x="1076" y="860" width="640" height="1" fill="#000" />
    <Tripod x={1101} y={928} right="x" up="y" centre="z" dir={[-1, 1]} />
  </Canvas>
);

/* ---------- shared parts ---------- */

const GlobalStyle = createGlobalStyle`
  * { box-sizing: border-box; }
  body { margin: 0; background: #444; }
  button, input, select { font: inherit; color: inherit; margin: 0; padding: 0; border: 0; border-radius: 0; }
  fieldset { margin: 0; }
`;

const Root = styled.div`
  display: flex;
  flex-direction: column;
  height: 100vh;
  min-height: 800px;
  overflow: hidden;
  background: #444;
  color: #e4e4e4;
  font: 12px/16px ${UI};
  white-space: nowrap;
`;

const Caret = styled.span`
  width: 0;
  height: 0;
  flex: none;
  border: ${(p) => p.$size || 3}px solid transparent;
  border-bottom-width: 0;
  border-top-color: ${(p) => p.$color || '#e0e0e0'};
`;

const Spacer = styled.div`
  flex: ${(p) => (p.$size ? `0 0 ${p.$size}px` : '1')};
`;

const SelectWrap = styled.label`
  display: grid;
  align-items: center;
  width: ${(p) => p.$width};
  height: ${(p) => p.$height || 20}px;
  background: ${(p) => p.$bg || '#646464'};
  color: ${(p) => p.$ink || '#e4e4e4'};
  font-size: 11px;

  select {
    grid-area: 1 / 1;
    appearance: none;
    width: 100%;
    height: 100%;
    padding: 0 14px 0 4px;
    background: none;
  }

  ${Caret} {
    grid-area: 1 / 1;
    justify-self: end;
    margin-right: 6px;
    pointer-events: none;
  }
`;

const Dropdown = ({ value, label, caret, ...rest }) => (
  <SelectWrap {...rest}>
    <select aria-label={label} defaultValue={value}><option>{value}</option></select>
    <Caret $size={caret || 4} $color={rest.$ink} />
  </SelectWrap>
);

/* ---------- title bar and menu ---------- */

const Header = styled.header`
  display: flex;
  flex: none;
`;

const Logo = styled.button`
  display: flex;
  flex-direction: column;
  align-items: center;
  width: 41px;
  height: 46px;
  padding-right: 4px;
  background: linear-gradient(#4f7f80, #c2cfcf 50%, #7b8a8a);
  color: #0f8f94;
  font: bold 30px/34px "Liberation Sans", sans-serif;

  small {
    font-size: 8px;
    font-weight: normal;
    line-height: 10px;
  }
`;

const HeaderRows = styled.div`
  flex: 1;
`;

const TitleBar = styled.div`
  display: flex;
  align-items: center;
  height: 25px;
  background: #4b4947;
`;

const QuickBar = styled.div`
  display: flex;
  align-items: center;
  height: 23px;
  background: linear-gradient(#a2a2a2, #828282);
`;

const QuickButton = styled.button`
  display: flex;
  align-items: center;
  justify-content: center;
  width: ${(p) => p.$width || 24}px;
  height: 22px;
  background: none;
  color: ${(p) => p.$color};
  font: bold 9px/16px ${UI};
`;

const Title = styled.h1`
  flex: 1;
  margin: 0;
  text-align: center;
  font: 11px/16px ${UI};
  color: #111;
  white-space: pre;
`;

const SearchInput = styled.input`
  width: 180px;
  height: 22px;
  padding-left: 4px;
  border: 1px solid #000;
  background: #fff;
  font-size: 11px;
  font-style: italic;

  &::placeholder { color: #555; }
`;

const SignIn = styled.button`
  width: 85px;
  background: none;
  color: #111;
  font-size: 11px;
  text-align: left;
`;

const WindowButton = styled.button`
  width: 45px;
  height: 24px;
  background: none;
  color: #fff;
  display: flex;
  align-items: center;
  justify-content: center;
`;

const MenuBar = styled.nav`
  display: flex;
  align-items: center;
  gap: 24px;
  height: 21px;
  padding-left: 14px;
  background: linear-gradient(#a0a0a0, #5a5a5a);

  a {
    color: #fff;
    text-decoration: none;
    font-size: 11px;
    line-height: 16px;
  }
`;

const MENUS = ['Edit', 'Tools', 'Group', 'Views', 'Create', 'Modifiers', 'Animation', 'Graph Editors', 'Rendering', 'Civil View', 'Customize', 'Scripting', 'Content', 'Help'];

const TopHeader = () => (
  <Header>
    <Logo aria-label="Application menu">3<small>MAX</small></Logo>
    <HeaderRows>
      <TitleBar>
        <QuickBar>
          <QuickButton $width={32}><Icon name="file" size={18} /></QuickButton>
          <QuickButton><Icon name="open" size={18} /></QuickButton>
          <QuickButton><Icon name="save" size={16} /></QuickButton>
          <QuickButton><Icon name="uarrow" size={18} /></QuickButton>
          <QuickButton $width={12}><Caret $color="#333" /></QuickButton>
          <QuickButton><Icon name="rarrow" size={18} /></QuickButton>
          <QuickButton $width={12}><Caret $color="#333" /></QuickButton>
          <QuickButton><Icon name="project" size={18} /></QuickButton>
          <QuickButton $color="#31459a">MT</QuickButton>
          <QuickButton $color="#08733c">MOD</QuickButton>
          <QuickButton $color="#2f6a35">STM</QuickButton>
          <Dropdown label="Workspace" value="Workspace: Default" $width="128px" $height={21} $bg="#f0f0f0" $ink="#111" caret={3} />
          <QuickButton $width={16}><Caret $size={4} $color="#222" /></QuickButton>
        </QuickBar>
        <Title>{'Autodesk 3ds Max 2017 - Student Version    barioso.max'}</Title>
        <QuickBar>
          <QuickButton $width={12} $color="#222">▸</QuickButton>
          <SearchInput aria-label="Search" placeholder="Type a keyword or phrase" />
          <QuickButton><Icon name="bino" size={17} /></QuickButton>
          <QuickButton><Icon name="dish" size={17} /></QuickButton>
          <QuickButton><Icon name="star" size={17} /></QuickButton>
          <QuickButton><Icon name="user" size={17} /></QuickButton>
          <SignIn>Sign In</SignIn>
          <Caret $color="#333" />
          <QuickButton $width={36}><Icon name="exchange" size={18} /></QuickButton>
          <QuickButton $width={34}><Icon name="help" size={18} /></QuickButton>
          <QuickButton $width={10}><Caret $color="#333" /></QuickButton>
        </QuickBar>
        <Spacer $size={24} />
        <WindowButton aria-label="Minimise"><svg width="11" height="11"><path d="M0 5.500h11" stroke="#fff" /></svg></WindowButton>
        <WindowButton aria-label="Restore"><svg width="11" height="11"><path d="M.5 2.500h8v8h-8zM2.500 2.500v-2h8v8h-2" fill="none" stroke="#fff" /></svg></WindowButton>
        <WindowButton aria-label="Close"><svg width="11" height="11"><path d="M0 0l11 11M11 0L0 11" stroke="#fff" /></svg></WindowButton>
      </TitleBar>
      <MenuBar>{MENUS.map((m) => <a key={m} href="#menu">{m}</a>)}</MenuBar>
    </HeaderRows>
  </Header>
);

/* ---------- main toolbar ---------- */

const Toolbar = styled.div`
  display: flex;
  flex: none;
  height: 38px;
  padding: 3px 0;
  background: #444;
  border-bottom: 1px solid #1c1c1c;
`;

const Grip = styled.span`
  flex: none;
  width: 3px;
  margin: 0 2px 0 3px;
  border: solid #1d1d1d;
  border-width: 0 1px;
`;

const Tool = styled.button`
  display: flex;
  align-items: center;
  justify-content: center;
  width: 30px;
  height: 30px;
  margin: 0 1px;
  border-radius: 3px;
  background: ${(p) => (p.$on ? '#5b86c0' : 'none')};
`;

const ToolSep = styled.span`
  width: 2px;
  height: 16px;
  margin: 11px 2px 0;
  background: #222;
`;

const ToolLabel = styled.span`
  width: 72px;
  padding: 9px 0 0 1px;
  font-size: 11px;
`;

const MainToolbar = () => {
  const group = (names, on) => names.map((n) => <Tool key={n} aria-label={n} $on={n === on}><Icon name={n} size={26} /></Tool>);
  return (
    <Toolbar>
      <Grip />
      {group(['undo', 'redo'])}
      <ToolSep />
      {group(['link', 'unlink', 'bind'])}
      <ToolSep />
      <Dropdown label="Selection filter" value="All" $width="70px" />
      {group(['pick', 'byname', 'region', 'crossing'])}
      <ToolSep />
      {group(['move', 'rotate', 'scale', 'place'], 'move')}
      <Dropdown label="Reference coordinates" value="View" $width="70px" />
      {group(['pivot'])}
      <ToolSep />
      {group(['manip', 'keyb'])}
      <ToolSep />
      {group(['snap', 'angle', 'percent', 'spinner'], 'angle')}
      <ToolLabel>ments to Obje</ToolLabel>
      <ToolSep />
      {group(['named'])}
      <Dropdown label="Named selection sets" value="Create Selection Se" $width="118px" />
      <ToolSep />
      {group(['mirror', 'align'])}
      <ToolSep />
      {group(['layers', 'layerbox'])}
      <ToolSep />
      {group(['ribbon', 'curve', 'schem'], 'ribbon')}
      <ToolSep />
      {group(['material'])}
      <ToolSep />
      {group(['rsetup', 'rframe', 'rprod', 'rcloud', 'gallery'])}
      <Grip />
      <Grip />
      {group(['ax', 'ay', 'az', 'axy', 'axp'], 'ax')}
      <Grip />
    </Toolbar>
  );
};

/* ---------- ribbon ---------- */

const Ribbon = styled.section`
  display: flex;
  flex: none;
  height: 120px;
  background: #525252;
  border-bottom: 1px solid #2c2c2c;
`;

const RibbonBody = styled.div`
  flex: 1;
  display: flex;
  flex-direction: column;
`;

const Tabs = styled.div`
  display: flex;
  align-items: stretch;
  height: 21px;
  padding-left: 7px;
  border-bottom: 1px solid #333;
`;

const Tab = styled.button`
  padding: 0 18px;
  background: ${(p) => (p.$on ? '#5e5e5e' : 'none')};
  border: solid ${(p) => (p.$on ? '#333' : 'transparent')};
  border-width: 1px 1px 0;
  margin: 3px 0 -1px;
  color: ${(p) => (p.$on ? '#d6d6d6' : '#a3a3a3')};
  font-size: 12px;
  line-height: 14px;
`;

const TabToggle = styled.button`
  display: flex;
  align-items: center;
  gap: 6px;
  margin-left: 16px;
  background: none;

  i {
    display: grid;
    place-items: center;
    width: 14px;
    height: 8px;
    border-radius: 2px;
    background: #eee;
  }
`;

const Tri = styled.i`
  border: 3px solid transparent;
  ${(p) => (p.$up
    ? css`border-top-width: 0; border-bottom-color: ${p.$color || '#e0e0e0'};`
    : css`border-bottom-width: 0; border-top-color: #e0e0e0;`)}
`;

const ToggleMark = styled(Tri)`
  && {
    width: 0;
    height: 0;
    border-radius: 0;
    background: none;
  }
`;

const Panels = styled.div`
  flex: 1;
  display: flex;
  gap: 2px;
  padding: 1px 4px;
  background: linear-gradient(#4c4c4c, #393939);
`;

const Panel = styled.div`
  display: flex;
  flex-direction: column;
  background: #5c5c5c;
`;

const PanelBody = styled.div`
  flex: 1;
  display: flex;
  padding-top: 3px;
`;

const PanelFoot = styled.button`
  display: flex;
  align-items: center;
  justify-content: center;
  gap: 6px;
  height: 17px;
  background: #4a4a4a;
  border-bottom: 1px solid #3a3a3a;
  font-size: 12px;
`;

const Group = styled.div`
  display: grid;
  grid-template-columns: ${(p) => p.$cols || 'auto'};
  grid-auto-rows: ${(p) => p.$row || 24}px;
  align-content: ${(p) => p.$align || 'start'};
  align-items: center;
  width: ${(p) => p.$width}px;
  height: 74px;
  padding-left: ${(p) => p.$pad || 0}px;
  border-left: 1px solid ${(p) => (p.$line ? '#3f3f3f' : 'transparent')};
`;

const Row = styled.div`
  display: flex;
  align-items: center;
  gap: ${(p) => p.$gap || 0}px;
  padding-left: ${(p) => p.$pad || 0}px;
`;

const RibbonButton = styled.button`
  display: flex;
  align-items: center;
  justify-content: center;
  gap: 4px;
  width: ${(p) => p.$width || 24}px;
  height: 22px;
  border: 1px solid #3c3c3c;
  background: ${(p) => (p.$on ? 'linear-gradient(#7d9ccf, #5878ad)' : '#5f5f5f')};
  color: #d8d2c4;
  font: bold 16px/18px ${UI};
`;

const Flat = styled.button`
  display: flex;
  align-items: center;
  gap: ${(p) => p.$gap || 6}px;
  background: none;
  font-size: 12px;
`;

const SpinWrap = styled.label`
  display: grid;
  grid-template-columns: 1fr 10px;
  width: ${(p) => p.$width || 42}px;
  height: 16px;
  border: 1px solid #3a3a3a;
  background: #6e6e6e;

  input {
    min-width: 0;
    width: 100%;
    padding-left: 2px;
    background: none;
    font-size: 11px;
    line-height: 14px;
    color: ${(p) => (p.$dark ? '#111' : '#e4e4e4')};
  }
`;

const Arrows = styled.span`
  display: flex;
  flex-direction: column;
  align-items: center;
  justify-content: center;
  gap: 3px;
  background: ${(p) => (p.$flat ? 'none' : '#5a5a5a')};
`;

const Spin = ({ value, label, width, dark }) => (
  <SpinWrap $width={width} $dark={dark}>
    <input aria-label={label} defaultValue={value} />
    <Arrows><Tri $up /><Tri /></Arrows>
  </SpinWrap>
);

const Cell = styled.span`
  display: flex;
  align-items: center;
  gap: 6px;
`;

const RibbonBar = () => (
  <Ribbon>
    <Grip />
    <RibbonBody>
      <Tabs>
        {['Modeling', 'Freeform', 'Selection', 'Object Paint', 'Populate'].map((t) => (
          <Tab key={t} $on={t === 'Object Paint'}>{t}</Tab>
        ))}
        <TabToggle aria-label="Minimise ribbon"><i><ToggleMark as="b" $up $color="#333" /></i><Caret /></TabToggle>
      </Tabs>
      <Panels>
        <Panel>
          <PanelBody>
            <Group $width={62} $row={37} $pad={8}>
              <Flat $gap={10}><Icon name="paintbrush" size={32} /><Caret /></Flat>
              <Flat><Icon name="can" size={30} /></Flat>
            </Group>
            <Group $line $width={98} $pad={7}>
              <Flat $gap={10}>No Object... <Caret /></Flat>
              <Row $pad={34} $gap={4}>
                <RibbonButton aria-label="Edit object list"><Icon name="editlist" size={18} /></RibbonButton>
                <RibbonButton aria-label="Pick objects"><Icon name="pickobj" size={18} /></RibbonButton>
              </Row>
              <Row $pad={4} $gap={8}>Fill #: <Spin label="Fill" value="10" width={40} /></Row>
            </Group>
            <Group $line $width={100} $pad={5} $align="center">
              <Row $gap={4}>Paint On:
                <RibbonButton $width={40} aria-label="Paint on"><Icon name="painton" size={18} /><Caret /></RibbonButton>
              </Row>
              <Row $pad={6} $gap={6}>Offset: <Spin label="Offset" value="-0.01" width={40} /></Row>
            </Group>
          </PanelBody>
          <PanelFoot>Paint Objects <Caret $size={4} /></PanelFoot>
        </Panel>
        <Panel>
          <PanelBody>
            <Group $width={44} $row={37} $pad={7}>
              <Icon name="check" size={28} />
              <Icon name="cross" size={28} />
            </Group>
            <Group $width={118} $pad={2}>
              <Row $pad={5}><Flat>Align: <Caret /></Flat></Row>
              <Row>
                <RibbonButton>X</RibbonButton>
                <RibbonButton>Y</RibbonButton>
                <RibbonButton $on>Z</RibbonButton>
                <Row $pad={12}><RibbonButton aria-label="Scatter"><Icon name="scatter" size={18} /></RibbonButton></Row>
              </Row>
              <Row $gap={3}><Icon name="dotbrush" size={16} />Spacing: <Spin label="Spacing" value="25.85" /></Row>
            </Group>
            <Group $line $width={94} $pad={5} $cols="24px 18px 42px">
              <Icon name="dotbrush" size={16} />U: <Spin label="U" value="14.80" />
              <span />V: <Spin label="V" value="-3.500" />
              <span />W: <Spin label="W" value="0.000" />
            </Group>
            <Group $line $width={105} $pad={5} $cols="28px 23px 42px">
              <Icon name="rotobj" size={18} /><Cell>X <Caret /></Cell><Spin label="Rotate X" value="3" />
              <span /><Cell>Y <Caret /></Cell><Spin label="Rotate Y" value="3" />
              <span /><Cell>Z <Caret /></Cell><Spin label="Rotate Z" value="240" />
            </Group>
            <Group $line $width={190} $pad={4} $cols="50px 16px 54px 18px 42px">
              <Icon name="scaleobj" size={17} />X: <Spin label="Scale X" value="87" />&lt;<Spin label="Scale X end" value="114" />
              <Row $pad={10}><RibbonButton $width={34} aria-label="Scale mode"><Icon name="bars" size={17} /><Caret /></RibbonButton></Row>Y: <Spin label="Scale Y" value="87" dark />&lt;<Spin label="Scale Y end" value="114" dark />
              <Row $pad={10}><RibbonButton $on aria-label="Lock axes"><Icon name="lock" size={18} /></RibbonButton></Row>Z: <Spin label="Scale Z" value="87" dark />&lt;<Spin label="Scale Z end" value="114" dark />
            </Group>
          </PanelBody>
          <PanelFoot>Brush Settings <Caret $size={4} /></PanelFoot>
        </Panel>
      </Panels>
    </RibbonBody>
  </Ribbon>
);

/* ---------- scene explorer ---------- */

const Body = styled.main`
  flex: 1;
  display: flex;
  min-height: 0;
`;

const Explorer = styled.aside`
  display: flex;
  flex-direction: column;
  width: 130px;
  flex: none;
  padding: 4px 6px 0 2px;
  border-right: 2px solid #1d1d1d;
  font: 11px/16px ${TAHOMA};
`;

const ExplorerMenu = styled.div`
  display: flex;
  gap: 18px;
  height: 30px;
  padding: 6px 0 0 15px;
  border-top: 1px solid #151515;
`;

const More = styled.div`
  height: ${(p) => p.$height}px;
  text-align: right;
  color: #565694;
  font-size: 14px;
  line-height: 12px;
`;

const ExplorerBody = styled.div`
  flex: 1;
  display: flex;
  gap: 3px;
  min-height: 0;
`;

const FilterColumn = styled.div`
  display: flex;
  flex-direction: column;
  gap: 3px;
  padding-top: 3px;
  width: 22px;

  hr {
    width: 18px;
    height: 2px;
    margin: 0 auto 1px;
    border: 0;
    background: #777;
  }
`;

const Filter = styled.button`
  display: flex;
  align-items: center;
  justify-content: center;
  height: 20px;
  flex: none;
  background: ${(p) => (p.$on ? '#5b86c0' : 'none')};
`;

const ListBox = styled.div`
  flex: 1;
  display: flex;
  flex-direction: column;
  min-width: 0;
`;

const ListHead = styled.div`
  height: 21px;
  flex: none;
  padding: 2px 1px;
  border: 1px solid #5d5d5d;
  border-right: 0;
  overflow: hidden;
`;

const ListArea = styled.div`
  flex: 1;
  display: flex;
  min-height: 0;
`;

const Items = styled.ul`
  flex: 1;
  min-width: 0;
  margin: 0;
  padding: 0;
  list-style: none;
  overflow: hidden;
`;

const Item = styled.li`
  display: grid;
  grid-template-columns: 19px 14px 18px 1fr;
  align-items: center;
  height: 18px;

  &::before {
    content: '';
    width: 7px;
    margin-left: 9px;
    border-bottom: 1px dotted #777;
  }
`;

const ItemName = styled.span`
  height: 18px;
  padding: 2px 0 0 2px;
  overflow: hidden;
  background: ${(p) => (p.$picked ? '#808080' : p.$odd ? '#585858' : '#4b4b4b')};
`;

const VScroll = styled.div`
  display: flex;
  flex-direction: column;
  align-items: center;
  justify-content: space-between;
  width: 17px;
  padding: 4px 0;
  background: #f0f0f0;
`;

const HScroll = styled.div`
  display: flex;
  align-items: center;
  gap: 4px;
  height: 17px;
  padding: 0 20px 0 4px;
  flex: none;
  background: #f0f0f0;
`;

const Thumb = styled.span`
  background: #cdcdcd;
  ${(p) => (p.$v ? css`width: 15px; height: 21%;` : css`width: 17px; height: 15px; margin-right: auto;`)}
`;

const Chevron = ({ d }) => <svg width="9" height="9" viewBox="0 0 9 9"><path d={d} fill="none" stroke="#444" strokeWidth="2" /></svg>;

const Listener = styled.div`
  display: flex;
  flex-direction: column;
  gap: 1px;
  margin-top: auto;
  border-top: 1px solid #1a1a1a;
  padding-top: 2px;

  input {
    height: 23px;
    width: 100%;
    border: 2px solid #8d8d8d;
    border-right-color: #eee;
    border-bottom-color: #eee;
    padding-left: 4px;
    font: 12px/16px "Liberation Mono", monospace;
    color: #000;
    background: #fff;
  }

  input:first-child { background: #dbc3c3; }
`;

const ROWS = [...Array(30).fill('Geo_'), 'Line001', 'Object', 'Object', 'Object', 'Object', 'Rectangle', 'Shape', ''];

const FILTERS = ['sphere', 'shapes', 'bulb', 'camera', 'helper', 'waves', 'group', 'xref', 'bone', 'container', 'frozen', 'eye'];

const SceneExplorer = () => (
  <Explorer>
    <ExplorerMenu><span>Select</span><span>Display</span></ExplorerMenu>
    <More $height={24}>»</More>
    <ExplorerBody>
      <FilterColumn>
        {FILTERS.map((f) => <Filter key={f} aria-label={f} $on><Icon name={f} size={19} /></Filter>)}
        <hr />
        {['doc', 'blank', 'docframe'].map((f) => <Filter key={f} aria-label={f}><Icon name={f} size={18} /></Filter>)}
        <hr />
        {['funnelgear', 'funnel', 'brick'].map((f) => <Filter key={f} aria-label={f}><Icon name={f} size={18} /></Filter>)}
      </FilterColumn>
      <ListBox>
        <ListHead>Name (Sorted Ascending)</ListHead>
        <ListArea>
          <Items>
            {ROWS.map((name, i) => (
              <Item key={i}>
                <Icon name="eye" size={14} />
                <Icon name={/^(Line|Rect|Shape)/.test(name) ? 'shapes' : 'sphere'} size={16} />
                <ItemName $odd={i % 2} $picked={name === 'Line001'}>{name}</ItemName>
              </Item>
            ))}
          </Items>
          <VScroll>
            <Chevron d="M0 6l4-4 4 4" />
            <Spacer />
            <Thumb $v />
            <Spacer $size={16} />
            <Chevron d="M0 2l4 4 4-4" />
          </VScroll>
        </ListArea>
        <HScroll>
          <Chevron d="M6 0L2 4l4 4" />
          <Thumb />
          <Chevron d="M2 0l4 4-4 4" />
        </HScroll>
      </ListBox>
    </ExplorerBody>
    <More $height={28}>»</More>
    <Listener>
      <input aria-label="Macro recorder" />
      <input aria-label="MAXScript listener" defaultValue="Welcome to MAXScript." />
    </Listener>
  </Explorer>
);

/* ---------- viewports, time slider ---------- */

const Work = styled.div`
  flex: 1;
  display: flex;
  flex-direction: column;
  min-width: 0;
`;

const Upper = styled.div`
  flex: 1;
  display: flex;
  min-height: 0;
`;

const Center = styled.div`
  flex: 1;
  display: flex;
  flex-direction: column;
  min-width: 0;
`;

const ViewGrid = styled.div`
  flex: 1;
  display: grid;
  grid-template-columns: 940fr 642fr;
  grid-template-rows: 559fr 188fr;
  gap: 4px;
  min-height: 0;
`;

const View = styled.div`
  display: grid;
  grid-template-rows: minmax(0, 1fr);
  min-width: 0;
  min-height: 0;
  overflow: hidden;
  background: #343434;
  border: 2px solid ${(p) => (p.$active ? '#7f6c27' : '#303030')};
`;

const ViewLabel = styled.div`
  grid-area: 1 / 1;
  z-index: 1;
  align-self: start;
  padding: 6px 4px;
  font: 11px/16px ${TAHOMA};
  color: #c8c8c8;
`;

const Stats = styled.table`
  grid-area: 1 / 1;
  z-index: 1;
  align-self: start;
  justify-self: start;
  margin: 37px 0 0 13px;
  border-collapse: collapse;
  font: 11px/16px ${TAHOMA};
  color: #dfca22;

  th, td {
    padding: 0;
    font-weight: normal;
    text-align: left;
  }

  th:first-child { width: 40px; }
`;

const SliderRow = styled.div`
  display: flex;
  gap: 2px;
  height: 19px;
  padding: 1px;
  border-bottom: 1px solid #0d0d0d;
`;

const SliderButton = styled.button`
  width: ${(p) => p.$width}px;
  border-radius: 3px;
  background: #646464;
  font-size: 12px;
  line-height: 14px;
`;

const TrackRow = styled.div`
  display: flex;
  height: 26px;
`;

const TrackIcon = styled.div`
  width: 49px;
  padding: 4px 0 0 13px;
`;

const Ruler = styled.div`
  flex: 1;
  display: flex;
  margin-right: 48px;
  height: 25px;
  background: #2a2a2a;
`;

const Tick = styled.div`
  flex: 1;
  display: flex;
  flex-direction: column;
  align-items: center;
  justify-content: flex-end;
  width: 0;
  font-size: 11px;
  line-height: 13px;
  background:
    linear-gradient(#6a6a6a, #6a6a6a) center top / 1px ${(p) => (p.$major ? '25px' : '11px')} no-repeat,
    ${(p) => (p.$now ? 'linear-gradient(#88831c, #88831c) center / 8px 100% no-repeat' : 'none')};
  color: ${(p) => (p.$now ? '#f2ec4a' : '#e4e4e4')};
`;

const Viewports = () => (
  <Center>
    <ViewGrid>
      <View $active><TopScene /><ViewLabel>[+] [Top ] [Standard ] [Wireframe ]</ViewLabel></View>
      <View><FrontScene /><ViewLabel>[+] [Front ] [Standard ] [Wireframe ]</ViewLabel></View>
      <View><LeftScene /><ViewLabel>[+] [Left ] [Standard ] [Wireframe ]</ViewLabel></View>
      <View>
        <OrthoScene />
        <ViewLabel>[+] [Orthographic ] [Standard ] [Edged Faces ]</ViewLabel>
        <Stats>
          <tbody>
            <tr><th /><th>Total</th></tr>
            <tr><th>Polys:</th><td>41,565</td></tr>
            <tr><th>Verts:</th><td>40,296</td></tr>
          </tbody>
        </Stats>
      </View>
    </ViewGrid>
    <SliderRow>
      <SliderButton $width={14}>&lt;</SliderButton>
      <SliderButton $width={123}>0 / 100</SliderButton>
      <SliderButton $width={14}>&gt;</SliderButton>
    </SliderRow>
    <TrackRow>
      <TrackIcon><Icon name="mini" size={17} /></TrackIcon>
      <Ruler>
        {Array.from({ length: 101 }, (_, i) => (
          <Tick key={i} $major={i % 5 === 0} $now={i === 0}>{i % 5 === 0 ? i : ''}</Tick>
        ))}
      </Ruler>
    </TrackRow>
  </Center>
);

/* ---------- command panel ---------- */

const Command = styled.aside`
  display: flex;
  flex-direction: column;
  width: 201px;
  flex: none;
  padding: 0 2px 0 8px;
  border-bottom: 1px solid #353535;
  border-left: 2px solid #3a3a3a;
  font: 11px/16px ${TAHOMA};
`;

const CommandTabs = styled.div`
  display: flex;
  height: 28px;
  margin: 0 -2px 6px -6px;

  button {
    display: flex;
    align-items: center;
    justify-content: center;
    width: 32px;
    background: #3d3d3d;
    border: solid #363636;
    border-width: 0 1px 1px;
  }

  button:nth-child(2) {
    background: #444;
    border-bottom: 0;
  }
`;

const NameRow = styled.div`
  display: flex;
  gap: 6px;
  margin-bottom: 10px;

  input {
    flex: 1;
    min-width: 0;
    height: 20px;
    padding-left: 3px;
    background: #646464;
  }

  button {
    width: 16px;
    background: #bf8433;
    border: 1px solid #222;
  }
`;

const Stack = styled.ul`
  height: 178px;
  margin: 5px 0 0;
  padding: 0;
  list-style: none;
  border: 2px solid #f2f2f2;
`;

const StackItem = styled.li`
  display: flex;
  align-items: center;
  gap: 6px;
  height: 17px;
  padding: 0 7px 0 ${(p) => p.$pad}px;
  border-bottom: 1px solid ${(p) => (p.$end ? '#8a8a8a' : 'transparent')};

  &::before {
    content: '';
    display: ${(p) => (p.$sub ? 'block' : 'none')};
    width: 16px;
    height: 17px;
    margin-right: -3px;
    margin-top: -17px;
    border: dotted #111;
    border-width: 0 0 1px 1px;
  }
`;

const Right = styled.i`
  border: 4px solid transparent;
  border-right-width: 0;
  border-left: 6px solid #ddd;
`;

const StackTools = styled.div`
  display: flex;
  align-items: center;
  gap: 5px;
  height: 34px;
  padding-left: 1px;

  button {
    display: flex;
    align-items: center;
    justify-content: center;
    width: 22px;
    height: 22px;
    border-radius: 2px;
    background: none;
  }

  button[aria-pressed='true'] { background: #5b86c0; }

  span {
    width: 2px;
    height: 16px;
    background: #2a2a2a;
  }
`;

const Splitter = styled.div`
  display: flex;
  align-items: center;
  gap: 4px;
  height: 17px;

  &::before, &::after {
    content: '';
    flex: 1;
    height: 1px;
    background: #6b6b6b;
  }

  i {
    width: 12px;
    height: 4px;
    border: dotted #ddd;
    border-width: 1px 0;
  }
`;

const Rollout = styled.section`
  flex: none;
  display: flex;
  flex-direction: column;
  height: 407px;
  margin-right: 8px;
  padding: 0 21px;
  background: #525252;
  border: 1px solid #4a4a4a;
`;

const RolloutHead = styled.h2`
  display: flex;
  align-items: center;
  gap: 6px;
  margin: 2px -16px 15px;
  font: bold 12px/16px ${TAHOMA};

  i {
    width: 6px;
    height: 6px;
    margin-left: auto;
    border: dotted #999;
    border-width: 1px 0;
  }
`;

const Line = styled.div`
  display: flex;
  align-items: center;
  gap: ${(p) => p.$gap || 3}px;
  min-height: ${(p) => p.$height || 20}px;
  padding-left: ${(p) => p.$pad || 0}px;
`;

const Radios = styled.div`
  padding: 3px 0 0 21px;
`;

const Field = styled.span`
  display: grid;
  grid-template-columns: 1fr 12px;
  width: ${(p) => p.$width}px;
  height: ${(p) => p.$height || 16}px;
  background: #646464;
  border: 1px solid #4b4b4b;

  input {
    min-width: 0;
    width: 100%;
    padding-left: 3px;
    background: none;
  }
`;

const Num = ({ value, label, width, height }) => (
  <Field $width={width} $height={height}>
    <input aria-label={label} defaultValue={value} />
    <Arrows $flat><Tri $up /><Tri /></Arrows>
  </Field>
);

const Option = styled.label`
  display: flex;
  align-items: center;
  gap: ${(p) => (p.$radio ? 6 : 2)}px;

  input {
    appearance: none;
    display: grid;
    place-items: center;
    width: ${(p) => (p.$radio ? 12 : 11)}px;
    height: ${(p) => (p.$radio ? 12 : 11)}px;
    border-radius: ${(p) => (p.$radio ? 6 : 0)}px;
    background: #666;
  }

  input:checked::after {
    ${(p) => (p.$radio
    ? css`content: ''; width: 6px; height: 6px; border-radius: 3px; background: #f4f4f4;`
    : css`content: '✔'; font: 11px/11px "DejaVu Sans", sans-serif; color: #fff;`)}
  }

  span { outline: ${(p) => (p.$focus ? '1px dotted #999' : 'none')}; }
`;

const PushButton = styled.button`
  height: ${(p) => p.$height || 25}px;
  margin: 0 ${(p) => p.$inset || 10}px 4px;
  border: 1px solid #4a4a4a;
  border-radius: 3px;
  background: #646464;

  &:disabled {
    background: #585858;
    color: #8c8c8c;
  }
`;

const Figure = styled.fieldset`
  display: flex;
  flex-direction: column;
  gap: 9px;
  height: 100px;
  margin: 6px 0 11px;
  padding: 13px 2px 0;
  border: 1px solid #3c3c3c;
  border-radius: 2px;

  legend {
    padding: 0 3px;
    margin-left: -1px;
  }
`;

const Credit = styled.button`
  height: 31px;
  border: 2px solid #f4f4f4;
  border-top-color: #a0a0a0;
  border-left-color: #a0a0a0;
  background: none;
  line-height: 13px;
  white-space: normal;
`;

const CommandPanel = () => (
  <Command>
    <CommandTabs>
      {['plus', 'modify', 'hier', 'motion', 'display', 'wrench'].map((n) => <button key={n} aria-label={n}><Icon name={n} size={20} /></button>)}
    </CommandTabs>
    <NameRow><input aria-label="Object name" defaultValue="Line001" /><button aria-label="Object colour" /></NameRow>
    <Dropdown label="Modifiers" value="Modifier List" $width="100%" $height={20} caret={3} />
    <Stack>
      <StackItem $pad={5} $end><Icon name="eye" size={14} /><Right /><span>&nbsp; Garment Maker</span></StackItem>
      <StackItem $pad={5}><Caret $size={4} />Line<Spacer /><Icon name="flower" size={12} /></StackItem>
      <StackItem $pad={10} $sub>Vertex<Spacer /><Icon name="flower" size={12} /></StackItem>
      <StackItem $pad={10} $sub>Segment</StackItem>
      <StackItem $pad={10} $sub $end>Spline</StackItem>
    </Stack>
    <StackTools>
      <button aria-label="Pin stack"><Icon name="pin" size={14} /></button>
      <span />
      <button aria-label="Show end result" aria-pressed="true"><Icon name="tube" size={20} /></button>
      <span />
      <button aria-label="Make unique"><Icon name="unique" size={18} /></button>
      <button aria-label="Remove modifier"><Icon name="trash" size={16} /></button>
      <span />
      <button aria-label="Configure sets"><Icon name="config" size={17} /></button>
    </StackTools>
    <Splitter><i /></Splitter>
    <Rollout>
      <RolloutHead><Caret $color="#aaa" />Main Parameters<i /></RolloutHead>
      <Line $pad={17} $gap={4} $height={22}>Density <Num label="Density" value="4.0" width={52} /></Line>
      <Line $gap={12}>
        <Option><input type="checkbox" defaultChecked /><span>Auto mesh</span></Option>
        <Option><input type="checkbox" defaultChecked /><span>Preserve</span></Option>
      </Line>
      <Line><Option $focus><input type="checkbox" defaultChecked /><span>Relax</span></Option></Line>
      <PushButton>Mesh It!</PushButton>
      <PushButton>Mesh It and Preserve</PushButton>
      <Radios>
        <Line $height={19}><Option $radio><input type="radio" name="panels" /><span>Arranged Panels</span></Option></Line>
        <Line $height={19}><Option $radio><input type="radio" name="panels" defaultChecked /><span>Preserved Surface</span></Option></Line>
        <Line $height={19}><Option $radio><input type="radio" name="panels" /><span>Flat Panels</span></Option></Line>
        <Line><Option><input type="checkbox" defaultChecked /><span>Stretch Map Coords</span></Option></Line>
      </Radios>
      <Figure>
        <legend>Figure</legend>
        <PushButton $height={24} $inset={24}>None</PushButton>
        <PushButton $height={23} $inset={8} disabled>Mark Points on Figure</PushButton>
      </Figure>
      <Credit>Technology Provided by Size8 Software, Inc.</Credit>
    </Rollout>
  </Command>
);

/* ---------- status bar ---------- */

const Status = styled.footer`
  display: flex;
  flex: none;
  height: 50px;
  font: 11px/16px ${TAHOMA};
`;

const Messages = styled.div`
  flex: 1;
  display: flex;
  flex-direction: column;
  gap: 9px;
  padding: 8px 0 0 3px;
`;

const StatusRows = styled.div`
  display: grid;
  grid-template-rows: 22px 20px;
  gap: 3px;
  width: ${(p) => p.$width}px;
  padding-top: 4px;
`;

const StatusRow = styled.div`
  display: flex;
  align-items: center;
  gap: ${(p) => p.$gap || 3}px;
  padding-left: ${(p) => p.$pad || 0}px;
`;

const IconButton = styled.button`
  display: flex;
  align-items: center;
  justify-content: center;
  width: ${(p) => p.$width || 24}px;
  height: 20px;
  border-radius: 2px;
  background: ${(p) => (p.$on ? '#5b86c0' : 'none')};
`;

const KeyGrid = styled.div`
  display: grid;
  grid-template-columns: 43px 46px 24px 88px;
  grid-template-rows: 20px 20px;
  gap: 3px 4px;
  width: 216px;
  padding-top: 4px;

  > button:first-child {
    grid-row: span 2;
    display: grid;
    place-items: center;
  }
`;

const KeyButton = styled.button`
  border-radius: 3px;
  border: 1px solid #555;
  background: #646464;
`;

const Selected = styled.div`
  grid-column: span 2;
`;

const PlayGrid = styled.div`
  display: grid;
  grid-template-columns: 28px repeat(8, 24px);
  grid-auto-rows: 20px;
  gap: 3px 0;
  width: 220px;
  padding-top: 4px;
`;

const FrameCell = styled.div`
  grid-column: span 3;
`;

const StatusBar = () => (
  <Status>
    <Messages><span>1 Object Selected</span><span>Click and drag to select and move objects</span></Messages>
    <StatusRows $width={437}>
      <StatusRow>
        <IconButton aria-label="Isolate"><Icon name="isolate" size={16} /></IconButton>
        <IconButton aria-label="Lock"><Icon name="padlock" size={16} /></IconButton>
        <IconButton aria-label="Absolute mode"><Icon name="absolute" size={16} /></IconButton>
        X: <Num label="X" value="-28.639m" width={68} height={18} />
        Y: <Num label="Y" value="1.823m" width={68} height={18} />
        Z: <Num label="Z" value="0.0m" width={68} height={18} />
        &nbsp;Grid = 1.0m
      </StatusRow>
      <StatusRow $pad={308} $gap={6}>
        <IconButton $on aria-label="Time tag"><Icon name="tag" size={16} /></IconButton>
        Add Time Tag
      </StatusRow>
    </StatusRows>
    <KeyGrid>
      <KeyButton aria-label="Set keys"><Icon name="bigkey" size={30} /></KeyButton>
      <KeyButton>Auto Key</KeyButton>
      <Selected><Dropdown label="Key set" value="Selected" $width="100%" $height={20} /></Selected>
      <KeyButton>Set Key</KeyButton>
      <IconButton aria-label="Tangents"><Icon name="tangent" size={20} /></IconButton>
      <KeyButton>Key Filters...</KeyButton>
    </KeyGrid>
    <PlayGrid>
      {['tostart', 'prev', 'play', 'next', 'toend', 'zoom', 'zoomall', 'zoomext', 'zoomextall'].map((n) => (
        <IconButton key={n} aria-label={n}><Icon name={n} size={17} /></IconButton>
      ))}
      <IconButton aria-label="Key mode"><Icon name="keymode" size={14} /></IconButton>
      <FrameCell><Num label="Frame" value="0" width={68} height={18} /></FrameCell>
      {['timecfg', 'zoomreg', 'hand', 'orbit', 'maxview'].map((n) => (
        <IconButton key={n} aria-label={n}><Icon name={n} size={17} /></IconButton>
      ))}
    </PlayGrid>
  </Status>
);

/* ---------- windows taskbar ---------- */

const Taskbar = styled.footer`
  display: flex;
  flex: none;
  height: 31px;
  background: #1b1b1b;
  color: #fff;
  border-bottom: 1px solid #000;
`;

const Task = styled.button`
  display: flex;
  align-items: center;
  justify-content: center;
  width: 37px;
  background: ${(p) => (p.$state === 'active' ? '#3a3a3a' : p.$state === 'alert' ? '#9b521b' : 'none')};
  border-bottom: 2px solid ${(p) => (p.$state === 'alert' ? '#ff7b0f' : p.$state ? '#a8a8a8' : 'transparent')};
`;

const Tray = styled.div`
  display: flex;
  align-items: center;
  gap: 8px;
  margin-left: auto;
  padding-right: 21px;
  font-size: 11px;
`;

const TASKS = [
  ['win'], ['search'], ['discord', 'alert'], ['obs'], ['folder'], ['monitor'], ['ps'], ['steam'],
  ['ie', 'open'], ['edge'], ['max3', 'active'], ['tree'], ['cc'], ['game'], ['s36'], ['steam', 'open'],
];

const WindowsTaskbar = () => (
  <Taskbar>
    {TASKS.map(([name, state], i) => <Task key={i} aria-label={name} $state={state}><Icon name={name} size={17} /></Task>)}
    <Tray>
      <Icon name="up" size={16} />
      <Icon name="steam" size={16} />
      <Icon name="volume" size={17} />
      <Icon name="net" size={17} />
      <Row $pad={3}><Icon name="pen" size={17} /></Row>
      <Row $pad={5}>ENG</Row>
      <Row $pad={5}><time>10:51</time></Row>
      <Row $pad={8}><Icon name="note" size={19} /></Row>
    </Tray>
  </Taskbar>
);

export default function App() {
  return (
    <Root>
      <GlobalStyle />
      <TopHeader />
      <MainToolbar />
      <RibbonBar />
      <Body>
        <SceneExplorer />
        <Work>
          <Upper>
            <Viewports />
            <CommandPanel />
          </Upper>
          <StatusBar />
        </Work>
      </Body>
      <WindowsTaskbar />
    </Root>
  );
}
